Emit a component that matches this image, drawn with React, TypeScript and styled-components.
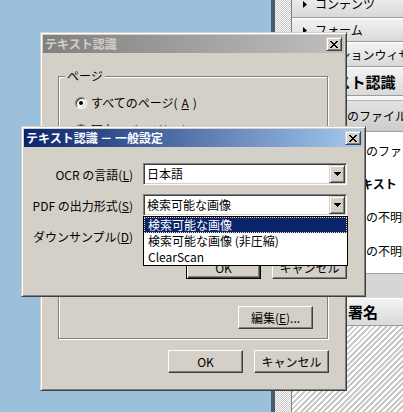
import React from 'react'
import styled, { createGlobalStyle, css } from 'styled-components'

const GlobalStyle = createGlobalStyle`
  html, body {
    margin: 0;
    padding: 0;
  }
  body {
    font-family: "Noto Sans CJK JP", "Noto Sans", sans-serif;
    font-size: 12px;
    color: #000;
  }
`

const Desktop = styled.div`
  position: relative;
  width: 403px;
  height: 412px;
  overflow: hidden;
  display: flex;
  background: #9ac0db;
`

const Wallpaper = styled.div`
  flex: 0 0 271px;
`

const Edge = styled.div`
  flex: 0 0 4px;
  background: #475d6c;
`

const Dither = styled.div`
  flex: 0 0 16px;
  background: repeating-conic-gradient(#ffffff 0 25%, #c6c6c6 0 50%) 0 0 / 2px 2px;
`

const Pane = styled.div`
  flex: 1;
  display: flex;
  flex-direction: column;
  margin-top: -10px;
  border-left: 1px solid #808080;
  background: #d8d8d8;
  overflow: hidden;
  white-space: nowrap;
`

const PaneRow = styled.div<{ $height: number; $indent: number; $bold?: boolean }>`
  flex: 0 0 ${({ $height }) => $height}px;
  box-sizing: border-box;
  display: flex;
  align-items: center;
  gap: 8px;
  padding-left: ${({ $indent }) => $indent}px;
  background: linear-gradient(#f3f3f3, #d9d9d9);
  border-top: 1px solid #ffffff;
  border-bottom: 1px solid #9c9c9c;
  font-size: ${({ $bold }) => ($bold ? 15 : 12)}px;
  font-weight: ${({ $bold }) => ($bold ? 700 : 400)};
  line-height: 16px;
`

const Arrow = styled.svg`
  flex: 0 0 4px;
`

const Section = styled.div`
  display: flex;
  flex-direction: column;
  padding-top: 4px;
  background: #f7f7f7;
`

const SubHeader = styled.div<{ $indent: number }>`
  height: 32px;
  box-sizing: border-box;
  display: flex;
  align-items: center;
  padding-left: ${({ $indent }) => $indent}px;
  background: linear-gradient(#e2e2e2, #cccccc);
  border-top: 1px solid #b4b4b4;
  border-bottom: 1px solid #a0a0a0;
  line-height: 16px;
`

const TaskList = styled.div`
  display: flex;
  flex-direction: column;
  padding: 2px 0 4px;
  background: #ffffff;
`

const TaskItem = styled.div<{ $height: number; $indent: number; $bold?: boolean }>`
  height: ${({ $height }) => $height}px;
  display: flex;
  align-items: center;
  padding-left: ${({ $indent }) => $indent}px;
  font-weight: ${({ $bold }) => ($bold ? 700 : 400)};
  line-height: 16px;
`

const Spacer = styled.div`
  flex: 0 0 24px;
  background: #d6d6d6;
  border-top: 1px solid #a0a0a0;
`

const Stripes = styled.div`
  flex: 1;
  background: repeating-linear-gradient(135deg, #ffffff 0 2px, #c9c9c9 2px 4px);
`

const Window = styled.div<{ $x: number; $y: number; $w: number; $h: number }>`
  position: absolute;
  left: ${({ $x }) => $x}px;
  top: ${({ $y }) => $y}px;
  width: ${({ $w }) => $w}px;
  height: ${({ $h }) => $h}px;
  box-sizing: border-box;
  display: flex;
  flex-direction: column;
  padding: 2px;
  background: #d4d0c8;
  border: 1px solid;
  border-color: #d4d0c8 #404040 #404040 #d4d0c8;
  box-shadow: inset 1px 1px #ffffff, inset -1px -1px #808080;
`

const TitleBar = styled.div<{ $active?: boolean }>`
  flex: 0 0 18px;
  display: flex;
  align-items: center;
  justify-content: space-between;
  padding: 0 2px 0 2px;
  font-weight: 700;
  line-height: 14px;
  color: ${({ $active }) => ($active ? '#ffffff' : '#d4d0c8')};
  background: ${({ $active }) =>
    $active
      ? 'linear-gradient(to right, #0a246a, #a6caf0)'
      : 'linear-gradient(to right, #808080, #c0c0c0)'};
`

const raisedFace = css`
  box-sizing: border-box;
  display: flex;
  align-items: center;
  justify-content: center;
  background: #d4d0c8;
  border: 1px solid;
  border-color: #d4d0c8 #404040 #404040 #d4d0c8;
  box-shadow: inset 1px 1px #ffffff, inset -1px -1px #808080;
`

const CaptionButton = styled.div`
  ${raisedFace}
  width: 16px;
  height: 14px;
`

const DropButton = styled.div`
  ${raisedFace}
  flex: 0 0 16px;
  height: 18px;
`

const BackBody = styled.div`
  flex: 1;
  display: flex;
  flex-direction: column;
  gap: 11px;
  padding: 23px 15px 15px;
`

const Group = styled.div`
  position: relative;
  flex: 1;
  display: flex;
  flex-direction: column;
  gap: 13px;
  margin-right: 1px;
  padding: 19px 14px 9px 16px;
  border: 1px solid #808080;
  box-shadow: inset 1px 1px #ffffff, 1px 1px 0 #ffffff;
`

const Legend = styled.span`
  position: absolute;
  top: -8px;
  left: 6px;
  padding: 0 2px;
  background: #d4d0c8;
  line-height: 14px;
`

const RadioRow = styled.div`
  display: flex;
  align-items: center;
  gap: 4px;
  line-height: 14px;
`

const RadioMark = styled.span<{ $checked?: boolean }>`
  position: relative;
  flex: 0 0 12px;
  height: 12px;
  box-sizing: border-box;
  border-radius: 50%;
  background: #ffffff;
  border: 1px solid;
  border-color: #808080 #ffffff #ffffff #808080;
  box-shadow: inset 1px 1px #404040, inset -1px -1px #d4d0c8;

  ${({ $checked }) =>
    $checked &&
    css`
      &::after {
        content: '';
        position: absolute;
        left: 3px;
        top: 3px;
        width: 4px;
        height: 4px;
        border-radius: 50%;
        background: #000;
      }
    `}
`

const PushButton = styled.div<{ $default?: boolean }>`
  box-sizing: border-box;
  width: 75px;
  height: 23px;
  display: flex;
  align-items: center;
  justify-content: center;
  line-height: 14px;
  background: #d4d0c8;
  border: 1px solid;
  border-color: #ffffff #404040 #404040 #ffffff;
  box-shadow: inset -1px -1px #808080;

  ${({ $default }) =>
    $default &&
    css`
      border-color: #000;
      box-shadow: inset 1px 1px #ffffff, inset -1px -1px #404040,
        inset -2px -2px #808080;
    `}
`

const EditRow = styled.div`
  margin-top: auto;
  display: flex;
  justify-content: flex-end;
`

const ButtonRow = styled.div`
  display: flex;
  justify-content: flex-end;
  gap: 11px;
`

const FrontBody = styled.div`
  flex: 1;
  display: grid;
  grid-template-columns: 109px 204px;
  grid-auto-rows: 22px;
  column-gap: 10px;
  row-gap: 9px;
  padding: 16px 15px 15px 0;
`

const FieldLabel = styled.div`
  display: flex;
  align-items: center;
  justify-content: flex-end;
  white-space: nowrap;
`

const ComboSlot = styled.div`
  position: relative;
`

const Combo = styled.div`
  height: 22px;
  box-sizing: border-box;
  display: flex;
  align-items: center;
  padding: 1px;
  background: #ffffff;
  border: 1px solid;
  border-color: #808080 #ffffff #ffffff #808080;
  box-shadow: inset 1px 1px #404040, inset -1px -1px #d4d0c8;
`

const ComboValue = styled.span`
  flex: 1;
  padding-left: 2px;
  line-height: 16px;
`

const DropList = styled.div`
  position: absolute;
  top: 22px;
  left: 0;
  width: 205px;
  box-sizing: border-box;
  display: flex;
  flex-direction: column;
  background: #ffffff;
  border: 1px solid #000;
  z-index: 2;
`

const DropItem = styled.div<{ $selected?: boolean }>`
  height: 16px;
  box-sizing: border-box;
  display: flex;
  align-items: center;
  padding-left: 3px;
  line-height: 14px;
  border: 1px solid transparent;

  ${({ $selected }) =>
    $selected &&
    css`
      color: #ffffff;
      background: #0a246a;
      border: 1px dotted #f5db95;
    `}
`

const FrontButtons = styled(ButtonRow)`
  grid-column: 2;
`

const CloseGlyph = () => (
  <svg width="8" height="7" viewBox="0 0 8 7">
    <path
      fill="#000"
      d="M0 0h2v1H0z M6 0h2v1H6z M1 1h2v1H1z M5 1h2v1H5z M2 2h4v1H2z M3 3h2v1H3z M2 4h4v1H2z M1 5h2v1H1z M5 5h2v1H5z M0 6h2v1H0z M6 6h2v1H6z"
    />
  </svg>
)

const DropGlyph = () => (
  <svg width="7" height="4" viewBox="0 0 7 4">
    <path fill="#000" d="M0 0h7v1H0z M1 1h5v1H1z M2 2h3v1H2z M3 3h1v1H3z" />
  </svg>
)

const ComboBox = ({ value }: { value?: string }) => (
  <Combo>
    <ComboValue>{value}</ComboValue>
    <DropButton>
      <DropGlyph />
    </DropButton>
  </Combo>
)

const PaneArrow = () => (
  <Arrow width="4" height="7" viewBox="0 0 4 7">
    <path d="M0 0L4 3.5L0 7z" fill="#000" />
  </Arrow>
)

const ToolPane = () => (
  <Pane>
    <PaneRow $height={28} $indent={11}>
      <PaneArrow />
      コンテンツ
    </PaneRow>
    <PaneRow $height={24} $indent={11}>
      <PaneArrow />
      フォーム
    </PaneRow>
    <PaneRow $height={25} $indent={11}>
      <PaneArrow />
      アクションウィザード
    </PaneRow>
    <PaneRow $height={29} $indent={14} $bold>
      テキスト認識
    </PaneRow>
    <Section>
      <SubHeader $indent={43}>このファイル内のテキストを認識</SubHeader>
      <TaskList>
        <TaskItem $height={33} $indent={50}>
          複数のファイル内のテキストを認識
        </TaskItem>
        <TaskItem $height={33} $indent={9} $bold>
          不明瞭なテキスト
        </TaskItem>
        <TaskItem $height={33} $indent={50}>
          最初の不明瞭な部分
        </TaskItem>
        <TaskItem $height={36} $indent={50}>
          前回の不明瞭な部分
        </TaskItem>
      </TaskList>
    </Section>
    <Spacer />
    <PaneRow $height={28} $indent={11} $bold>
      証明と署名
    </PaneRow>
    <Stripes />
  </Pane>
)

export default function App() {
  return (
    <Desktop>
      <GlobalStyle />
      <Wallpaper />
      <Edge />
      <Dither />
      <ToolPane />

      <Window $x={40} $y={32} $w={307} $h={359}>
        <TitleBar>
          テキスト認識
          <CaptionButton>
            <CloseGlyph />
          </CaptionButton>
        </TitleBar>
        <BackBody>
          <Group>
            <Legend>ページ</Legend>
            <RadioRow>
              <RadioMark $checked />
              すべてのページ(<u>A</u>)
            </RadioRow>
            <RadioRow>
              <RadioMark />
              現在のページ(<u>C</u>)
            </RadioRow>
            <EditRow>
              <PushButton>
                編集(<u>E</u>)...
              </PushButton>
            </EditRow>
          </Group>
          <ButtonRow>
            <PushButton>OK</PushButton>
            <PushButton>キャンセル</PushButton>
          </ButtonRow>
        </BackBody>
      </Window>

      <Window $x={21} $y={126} $w={345} $h={171}>
        <TitleBar $active>
          テキスト認識 － 一般設定
          <CaptionButton>
            <CloseGlyph />
          </CaptionButton>
        </TitleBar>
        <FrontBody>
          <FieldLabel>
            OCR の言語(<u>L</u>)
          </FieldLabel>
          <ComboBox value="日本語" />
          <FieldLabel>
            PDF の出力形式(<u>S</u>)
          </FieldLabel>
          <ComboSlot>
            <ComboBox value="検索可能な画像" />
            <DropList>
              <DropItem $selected>検索可能な画像</DropItem>
              <DropItem>検索可能な画像 (非圧縮)</DropItem>
              <DropItem>ClearScan</DropItem>
            </DropList>
          </ComboSlot>
          <FieldLabel>
            ダウンサンプル(<u>D</u>)
          </FieldLabel>
          <ComboBox />
          <FrontButtons>
            <PushButton $default>OK</PushButton>
            <PushButton>キャンセル</PushButton>
          </FrontButtons>
        </FrontBody>
      </Window>
    </Desktop>
  )
}
